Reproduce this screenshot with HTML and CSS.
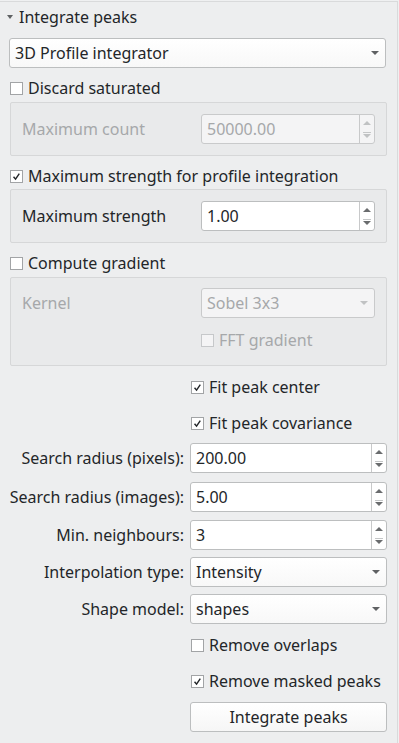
FILE: index.html
```html
<!DOCTYPE html>
<html lang="en">

<head>
  <meta charset="UTF-8" />
  <meta name="viewport" content="width=device-width, initial-scale=1.0" />
  <title>Integrate peaks</title>
  <link rel="stylesheet" href="styles.css">
</head>

<body>
  <div class="panel">
    <div class="section-title"><span class="caret"></span>Integrate peaks</div>

    <div class="combo combo-main">
      <span class="value">3D Profile integrator</span>
      <span class="arrow"></span>
    </div>

    <div class="check check-top">
      <span class="box"></span>
      <span>Discard saturated</span>
    </div>
    <div class="group group-small">
      <div class="group-grid">
        <span class="label disabled">Maximum count</span>
        <div class="spin disabled">
          <span class="value">50000.00</span>
          <span class="stepper"><span class="up"></span><span class="down"></span></span>
        </div>
      </div>
    </div>

    <div class="check check-top">
      <span class="box checked"><svg viewBox="0 0 13 13"><polyline points="3,6.8 5.4,9.6 9.8,3.2" /></svg></span>
      <span>Maximum strength for profile integration</span>
    </div>
    <div class="group group-small group-tight">
      <div class="group-grid">
        <span class="label">Maximum strength</span>
        <div class="spin">
          <span class="value">1.00</span>
          <span class="stepper"><span class="up"></span><span class="down"></span></span>
        </div>
      </div>
    </div>

    <div class="check check-top">
      <span class="box"></span>
      <span>Compute gradient</span>
    </div>
    <div class="group group-large">
      <div class="group-grid">
        <span class="label disabled">Kernel</span>
        <div class="combo disabled">
          <span class="value">Sobel 3x3</span>
          <span class="arrow"></span>
        </div>
        <span></span>
        <div class="check check-fft disabled">
          <span class="box"></span>
          <span>FFT gradient</span>
        </div>
      </div>
    </div>

    <div class="form">
      <div class="form-row row-fit">
        <span class="form-label"></span>
        <div class="check">
          <span class="box checked"><svg viewBox="0 0 13 13"><polyline points="3,6.8 5.4,9.6 9.8,3.2" /></svg></span>
          <span>Fit peak center</span>
        </div>
      </div>
      <div class="form-row row-cov">
        <span class="form-label"></span>
        <div class="check">
          <span class="box checked"><svg viewBox="0 0 13 13"><polyline points="3,6.8 5.4,9.6 9.8,3.2" /></svg></span>
          <span>Fit peak covariance</span>
        </div>
      </div>
      <div class="form-row row-pix">
        <span class="form-label">Search radius (pixels):</span>
        <div class="spin">
          <span class="value">200.00</span>
          <span class="stepper"><span class="up"></span><span class="down"></span></span>
        </div>
      </div>
      <div class="form-row row-img">
        <span class="form-label">Search radius (images):</span>
        <div class="spin">
          <span class="value">5.00</span>
          <span class="stepper"><span class="up"></span><span class="down"></span></span>
        </div>
      </div>
      <div class="form-row row-nb">
        <span class="form-label">Min. neighbours:</span>
        <div class="spin">
          <span class="value">3</span>
          <span class="stepper"><span class="up"></span><span class="down"></span></span>
        </div>
      </div>
      <div class="form-row row-interp">
        <span class="form-label">Interpolation type:</span>
        <div class="combo">
          <span class="value">Intensity</span>
          <span class="arrow"></span>
        </div>
      </div>
      <div class="form-row row-shape">
        <span class="form-label">Shape model:</span>
        <div class="combo">
          <span class="value">shapes</span>
          <span class="arrow"></span>
        </div>
      </div>
      <div class="form-row row-overlap">
        <span class="form-label"></span>
        <div class="check">
          <span class="box"></span>
          <span>Remove overlaps</span>
        </div>
      </div>
      <div class="form-row row-masked">
        <span class="form-label"></span>
        <div class="check">
          <span class="box checked"><svg viewBox="0 0 13 13"><polyline points="3,6.8 5.4,9.6 9.8,3.2" /></svg></span>
          <span>Remove masked peaks</span>
        </div>
      </div>
      <div class="form-row row-button">
        <span class="form-label"></span>
        <div class="button">Integrate peaks</div>
      </div>
    </div>
  </div>
</body>

</html>
```

FILE: styles.css
```css
body {
  margin: 0;
  background: #eff0f1;
  font-family: "Noto Sans", "DejaVu Sans", sans-serif;
  font-size: 16px;
  color: #232629;
}

.panel {
  width: 398px;
  height: 742px;
  margin-top: 1px;
  box-sizing: border-box;
  padding: 0 10px 0 9px;
  background: #edeeef;
  border-top: 1px solid #d9dadb;
  border-right: 1px solid #d9dadb;
}

.section-title {
  height: 30px;
  display: flex;
  align-items: center;
}

.caret {
  width: 0;
  height: 0;
  margin: 0 6px 1px -2px;
  border-left: 3.5px solid transparent;
  border-right: 3.5px solid transparent;
  border-top: 4px solid #5f6163;
}

/* inputs */

.combo,
.spin {
  height: 30px;
  box-sizing: border-box;
  border: 1px solid #bcbebf;
  border-radius: 3px;
  display: flex;
  align-items: center;
}

.combo {
  background: linear-gradient(#ffffff, #f8f8f8);
  padding: 0 6px 0 5px;
}

.combo .value {
  flex: 1;
}

.combo-main {
  margin: 6px 1px 0 0;
}

.arrow {
  width: 0;
  height: 0;
  border-left: 4px solid transparent;
  border-right: 4px solid transparent;
  border-top: 4px solid #5f6163;
}

.spin {
  background: #fff;
  padding-left: 5px;
}

.spin .value {
  flex: 1;
}

.stepper {
  width: 14px;
  height: 100%;
  border-left: 1px solid #c8c9ca;
  display: flex;
  flex-direction: column;
  align-items: center;
  justify-content: center;
  gap: 9px;
}

.up,
.down {
  width: 0;
  height: 0;
  border-left: 4px solid transparent;
  border-right: 4px solid transparent;
}

.up {
  border-bottom: 4px solid #6a6c6e;
}

.down {
  border-top: 4px solid #6a6c6e;
  position: relative;
}

.down::before {
  content: "";
  position: absolute;
  top: -6px;
  left: -4px;
  width: 8px;
  height: 1px;
  background: #c4c6c7;
}

.spin.disabled,
.combo.disabled {
  background: #f4f4f5;
  border-color: #c9cacb;
  color: #a6a8aa;
}

.spin.disabled .up {
  border-bottom-color: #c0c2c3;
}

.spin.disabled .down {
  border-top-color: #c0c2c3;
}

.combo.disabled .arrow {
  border-top-color: #c0c2c3;
}

/* checkboxes */

.check {
  height: 20px;
  display: flex;
  align-items: center;
  gap: 5px;
}

.check-top {
  margin-left: 1px;
  margin-top: 10px;
}

.box {
  width: 13px;
  height: 13px;
  box-sizing: border-box;
  border: 1px solid #a2a4a6;
  background: #fff;
  flex: none;
}

.box svg {
  display: block;
  width: 11px;
  height: 11px;
  margin: 0;
  fill: none;
  stroke: #232629;
  stroke-width: 1.7;
}

.check.disabled {
  color: #a6a8aa;
}

.check.disabled .box {
  border-color: #c6c8ca;
  background: #f4f4f5;
}

/* group boxes */

.group {
  margin: 4px 0 0 1px;
  box-sizing: border-box;
  border: 1px solid #d6d7d8;
  border-radius: 2px;
  background: #e9eaeb;
  padding: 11px 11px;
}

.group-tight {
  margin-top: 3px;
}

.group-grid {
  display: grid;
  grid-template-columns: 173px 174px;
  column-gap: 6px;
  align-items: center;
}

.group-large {
  padding: 10px 11px 15px;
}

.check-fft {
  margin-top: 12px;
}

.label.disabled {
  color: #a6a8aa;
}

/* form */

.form-row {
  display: grid;
  grid-template-columns: 175px 197px;
  column-gap: 6px;
  align-items: center;
}

.form-label {
  text-align: right;
}

.form-row .check {
  margin-left: 1px;
}

.row-fit { margin-top: 11px; }
.row-cov { margin-top: 16px; }
.row-pix { margin-top: 10px; }
.row-img { margin-top: 9px; }
.row-nb { margin-top: 8px; }
.row-interp { margin-top: 7px; }
.row-shape { margin-top: 7px; }
.row-overlap { margin-top: 11px; }
.row-masked { margin-top: 16px; }
.row-button { margin-top: 11px; }

.button {
  height: 30px;
  box-sizing: border-box;
  border: 1px solid #bcbebf;
  border-radius: 3px;
  background: linear-gradient(#ffffff, #f6f6f6);
  display: flex;
  align-items: center;
  justify-content: center;
}
```
